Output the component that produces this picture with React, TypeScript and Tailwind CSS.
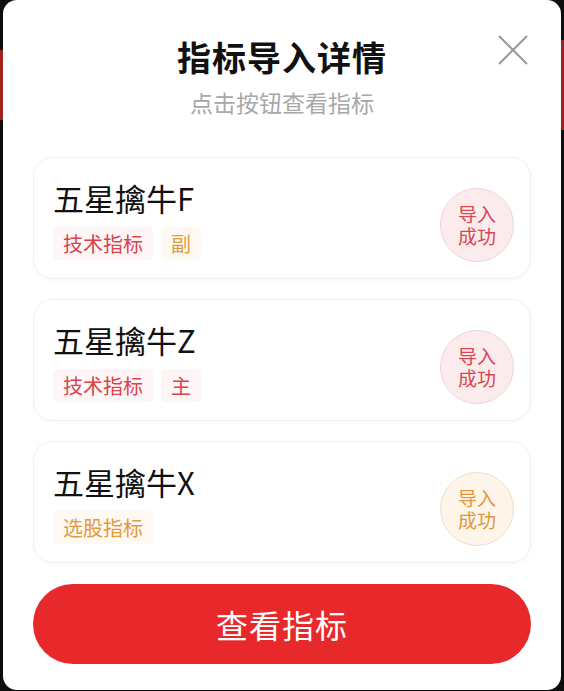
const items = [
  {
    name: "五星擒牛F",
    tags: [
      { text: "技术指标", cls: "text-[#d8434d] bg-[#fef6f6]" },
      { text: "副", cls: "text-[#e39a3b] bg-[#fef9f3]" },
    ],
    badge: "red",
  },
  {
    name: "五星擒牛Z",
    tags: [
      { text: "技术指标", cls: "text-[#d8434d] bg-[#fef6f6]" },
      { text: "主", cls: "text-[#d8434d] bg-[#fef6f6]" },
    ],
    badge: "red",
  },
  {
    name: "五星擒牛X",
    tags: [{ text: "选股指标", cls: "text-[#e39a3b] bg-[#fef9f3]" }],
    badge: "orange",
  },
];

export default function App() {
  return (
    <div
      className="relative w-[564px] h-[691px] bg-[#0d0d0d] overflow-hidden"
      style={{ fontFamily: '"Noto Sans CJK SC", "Noto Sans", sans-serif' }}
    >
      <div className="absolute left-0 top-[50px] w-[3px] h-[70px] bg-[#a3221e]" />
      <div className="absolute right-0 top-[40px] w-[3px] h-[90px] bg-[#a3221e]" />

      <div className="relative ml-[3px] w-[558px] h-[690px] bg-white rounded-[14px] px-[30px]">
        <button className="absolute right-[33px] top-[35px] w-[30px] h-[30px] text-[#9a9a9a]">
          <svg viewBox="0 0 30 30" width="30" height="30" fill="none" stroke="currentColor" strokeWidth="2">
            <path d="M1 1L29 29M29 1L1 29" />
          </svg>
        </button>

        <div className="flex flex-col items-center pt-[35px]">
          <h1 className="text-[34px] leading-[44px] font-bold text-[#111] tracking-[1px]">指标导入详情</h1>
          <p className="mt-[8px] text-[23px] leading-[30px] text-[#a8a8a8]">点击按钮查看指标</p>
        </div>

        <div className="mt-[40px] flex flex-col gap-[20px]">
          {items.map((it) => (
            <div
              key={it.name}
              className="flex items-start justify-between h-[122px] rounded-[20px] border border-[#f0f0f0] shadow-[0_1px_4px_rgba(0,0,0,0.03)] pl-[19px] pr-[16px]"
            >
              <div className="flex flex-col pt-[21px]">
                <div className="text-[31px] leading-[38px] text-[#111]">{it.name}</div>
                <div className="mt-[10px] flex gap-[8px]">
                  {it.tags.map((t) => (
                    <span key={t.text} className={`px-[10px] h-[33px] flex items-center text-[20px] rounded-[4px] ${t.cls}`}>
                      {t.text}
                    </span>
                  ))}
                </div>
              </div>
              <div
                className={`self-center mt-[14px] w-[74px] h-[74px] rounded-full border flex items-center justify-center text-center text-[19px] leading-[22px] ${
                  it.badge === "red"
                    ? "border-[#efd4d6] bg-[#fcebec] text-[#d9464f]"
                    : "border-[#f3dfc6] bg-[#fdf4ea] text-[#e3963a]"
                }`}
              >
                <span>
                  导入
                  <br />
                  成功
                </span>
              </div>
            </div>
          ))}
        </div>

        <button className="mt-[21px] w-full h-[80px] rounded-full bg-[#e8292c] text-white text-[32px] tracking-[1px]">
          查看指标
        </button>
      </div>
    </div>
  );
}
